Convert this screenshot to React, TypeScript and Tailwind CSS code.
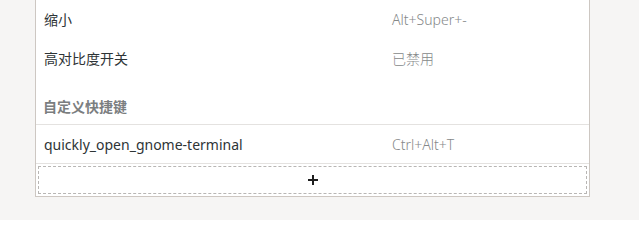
const font = { fontFamily: '"Noto Sans", "Noto Sans CJK SC", sans-serif' };

function Row({ name, accel, border }: { name: string; accel: string; border?: boolean }) {
  return (
    <div className={`flex h-[39px] items-center ${border ? "border-t border-[#e4e2e0]" : ""}`}>
      <span className="w-[356px] pl-[8px] text-[14px] text-[#2e3436]">{name}</span>
      <span className="text-[14px] font-light text-[#858889]">{accel}</span>
    </div>
  );
}

export default function App() {
  return (
    <div className="h-[220px] w-[639px] overflow-hidden bg-[#f6f5f4]" style={font}>
      <div className="ml-[35px] w-[555px] border-x border-b border-[#cdc7c2] bg-white">
        <Row name="缩小" accel="Alt+Super+-" />
        <Row name="高对比度开关" accel="已禁用" />
        <div className="flex h-[46px] items-end pb-[7px] pl-[7px] text-[14px] font-bold text-[#7b7e7f]">
          自定义快捷键
        </div>
        <Row name="quickly_open_gnome-terminal" accel="Ctrl+Alt+T" border />
        <div className="border-t border-[#e4e2e0] p-[2px]">
          <div className="flex h-[28px] items-center justify-center border border-dashed border-[#b8b6b4]">
            <svg width="12" height="12" viewBox="0 0 12 12">
              <path d="M6 1v10M1 6h10" stroke="#1e1e1e" strokeWidth="2" />
            </svg>
          </div>
        </div>
      </div>
    </div>
  );
}
